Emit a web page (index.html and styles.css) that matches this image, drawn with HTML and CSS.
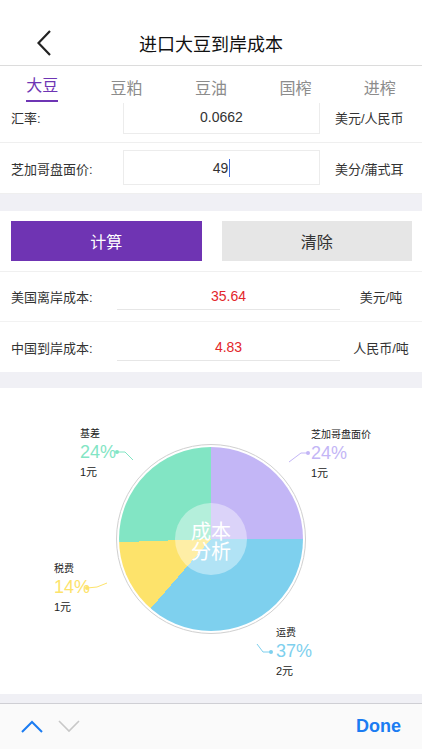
FILE: index.html
```html
<!DOCTYPE html>
<html lang="zh">
<head>
  <meta charset="UTF-8" />
  <title>进口大豆到岸成本</title>
  <link rel="stylesheet" href="styles.css">
</head>
<body>

  <header class="nav">
    <svg class="back" width="14" height="26" viewBox="0 0 14 26"><polyline points="13,1 1.5,13 13,25" fill="none" stroke="#222" stroke-width="2.2"/></svg>
    <h1>进口大豆到岸成本</h1>
  </header>

  <nav class="tabs">
    <a class="tab active"><span>大豆</span></a>
    <a class="tab"><span>豆粕</span></a>
    <a class="tab"><span>豆油</span></a>
    <a class="tab"><span>国榨</span></a>
    <a class="tab"><span>进榨</span></a>
  </nav>

  <section class="form">
    <div class="form-inner">
      <div class="row">
        <label>汇率:</label>
        <div class="input">0.0662</div>
        <span class="unit">美元/人民币</span>
      </div>
      <div class="row">
        <label>芝加哥盘面价:</label>
        <div class="input"><span class="caret">49</span></div>
        <span class="unit">美分/蒲式耳</span>
      </div>
    </div>
  </section>

  <div class="gap g17"></div>

  <section class="actions">
    <button class="btn calc">计算</button>
    <button class="btn clear">清除</button>
  </section>

  <section class="results">
    <div class="res-row">
      <label>美国离岸成本:</label>
      <div class="value">35.64</div>
      <span class="res-unit">美元/吨</span>
    </div>
    <div class="res-row">
      <label>中国到岸成本:</label>
      <div class="value">4.83</div>
      <span class="res-unit">人民币/吨</span>
    </div>
  </section>

  <div class="gap g16"></div>

  <section class="chart">
    <div class="ring">
      <div class="pie">
        <div class="hole"><span>成本<br>分析</span></div>
      </div>
    </div>

    <svg class="lines" width="422" height="306" viewBox="0 0 422 306">
      <polyline points="117,64 125,64 133,72" fill="none" stroke="#82e5c4"/>
      <circle cx="117" cy="64" r="2" fill="#82e5c4"/>
      <polyline points="289,74 301,65 308,65" fill="none" stroke="#c3b6f6"/>
      <circle cx="308" cy="65" r="2" fill="#c3b6f6"/>
      <polyline points="87,200 97,199 107,195" fill="none" stroke="#fde36b"/>
      <circle cx="87" cy="200" r="2" fill="#fde36b"/>
      <polyline points="257,256 263,264 271,264" fill="none" stroke="#7ed0ee"/>
      <circle cx="271" cy="264" r="2" fill="#7ed0ee"/>
    </svg>

    <div class="label jicha">
      <div class="name">基差</div>
      <div class="pct green">24%</div>
      <div class="amt">1元</div>
    </div>
    <div class="label cbot">
      <div class="name">芝加哥盘面价</div>
      <div class="pct purple">24%</div>
      <div class="amt">1元</div>
    </div>
    <div class="label tax">
      <div class="name">税费</div>
      <div class="pct yellow">14%</div>
      <div class="amt">1元</div>
    </div>
    <div class="label freight">
      <div class="name">运费</div>
      <div class="pct blue">37%</div>
      <div class="amt">2元</div>
    </div>
  </section>

  <div class="gap g9"></div>

  <footer class="toolbar">
    <svg class="arrow" width="22" height="13" viewBox="0 0 22 13"><polyline points="1,12 11,2 21,12" fill="none" stroke="#1b7cf2" stroke-width="2"/></svg>
    <svg class="arrow" width="22" height="13" viewBox="0 0 22 13"><polyline points="1,1 11,11 21,1" fill="none" stroke="#c8c8c8" stroke-width="1.6"/></svg>
    <span class="done">Done</span>
  </footer>

</body>
</html>
```

FILE: styles.css
```css
body{margin:0;width:422px;height:750px;overflow:hidden;background:#fff;font-family:"Liberation Sans","Noto Sans CJK SC",sans-serif;color:#333;}

/* nav */
.nav{height:45px;padding-top:20px;border-bottom:1px solid #dcdcdc;display:flex;align-items:center;justify-content:center;position:relative;}
.nav h1{margin:0;font-size:18px;font-weight:normal;color:#111;}
.back{position:absolute;left:37px;top:30px;}

/* tabs */
.tabs{height:37px;display:flex;}
.tab{flex:1;display:flex;justify-content:center;align-items:center;font-size:16px;color:#8c8c8c;}
.tab span{padding-top:4px;height:29px;line-height:29px;box-sizing:border-box;}
.tab.active span{color:#6e35b4;border-bottom:2px solid #6e35b4;height:35px;padding-top:6px;line-height:26px;}

/* form */
.form{height:91px;overflow:hidden;}
.form-inner{margin-top:-11px;}
.row{height:51px;display:flex;align-items:center;border-bottom:1px solid #efefef;box-sizing:border-box;font-size:13px;}
.row label{width:123px;padding-left:11px;box-sizing:border-box;}
.row .input{width:197px;height:35px;border:1px solid #ececec;box-sizing:border-box;display:flex;align-items:center;justify-content:center;font-size:14px;margin-top:-1px;}
.row .unit{margin-left:15px;}
.caret{border-right:1.5px solid #3d6ae0;padding-right:1px;line-height:18px;}

.gap{background:#f0f0f5;}
.g17{height:17px;}
.g16{height:16px;}
.g9{height:9px;}

/* buttons */
.actions{height:61px;padding:10px 10px 10px 11px;box-sizing:border-box;display:flex;gap:20px;border-bottom:1px solid #f0f0f0;}
.btn{flex:1;border:none;font-size:16px;font-family:inherit;}
.calc{background:#6f34b3;color:#fff;}
.clear{background:#e6e6e6;color:#333;}

/* results */
.res-row{height:50px;display:flex;align-items:center;font-size:13px;border-bottom:1px solid #f2f2f2;box-sizing:border-box;}
.res-row:last-child{border-bottom:none;}
.res-row label{width:117px;padding-left:11px;box-sizing:border-box;}
.value{width:223px;height:26px;margin-top:1px;border-bottom:1px solid #e6e6e6;box-sizing:border-box;text-align:center;color:#e3262b;font-size:14px;line-height:24px;}
.res-unit{flex:1;text-align:center;}

/* chart */
.chart{height:306px;position:relative;display:flex;justify-content:center;padding-top:56px;box-sizing:border-box;}
.ring{width:190px;height:190px;border:1px solid #d0d0d0;border-radius:50%;padding:2px;box-sizing:border-box;}
.pie{width:100%;height:100%;border-radius:50%;background:conic-gradient(#c3b6f6 0deg 90deg,#7ed0ee 90deg 221deg,#fde36b 221deg 268deg,#82e5c4 268deg 360deg);display:flex;align-items:center;justify-content:center;}
.hole{width:72px;height:72px;border-radius:50%;background:rgba(255,255,255,0.4);color:#fff;font-size:20px;line-height:20px;text-align:center;display:flex;align-items:center;justify-content:center;}
.hole span{padding-top:6px;}
.lines{position:absolute;left:0;top:0;}
.label{position:absolute;font-size:10px;color:#222;}
.label .name{height:16px;line-height:16px;}
.label .pct{height:20px;line-height:20px;font-size:18px;font-weight:300;}
.label .amt{height:20px;line-height:20px;font-size:11px;}
.jicha{left:80px;top:38px;}
.cbot{left:311px;top:39px;}
.tax{left:54px;top:173px;}
.freight{left:276px;top:237px;}
.green{color:#82e5c4;}
.purple{color:#c3b6f6;}
.yellow{color:#fde36b;}
.blue{color:#7ed0ee;}

/* toolbar */
.toolbar{height:46px;border-top:1px solid #cfcfd4;box-sizing:border-box;background:#fafafa;display:flex;align-items:center;padding:0 21px;gap:15px;}
.done{margin-left:auto;color:#1b7cf2;font-size:18px;font-weight:bold;}
```
